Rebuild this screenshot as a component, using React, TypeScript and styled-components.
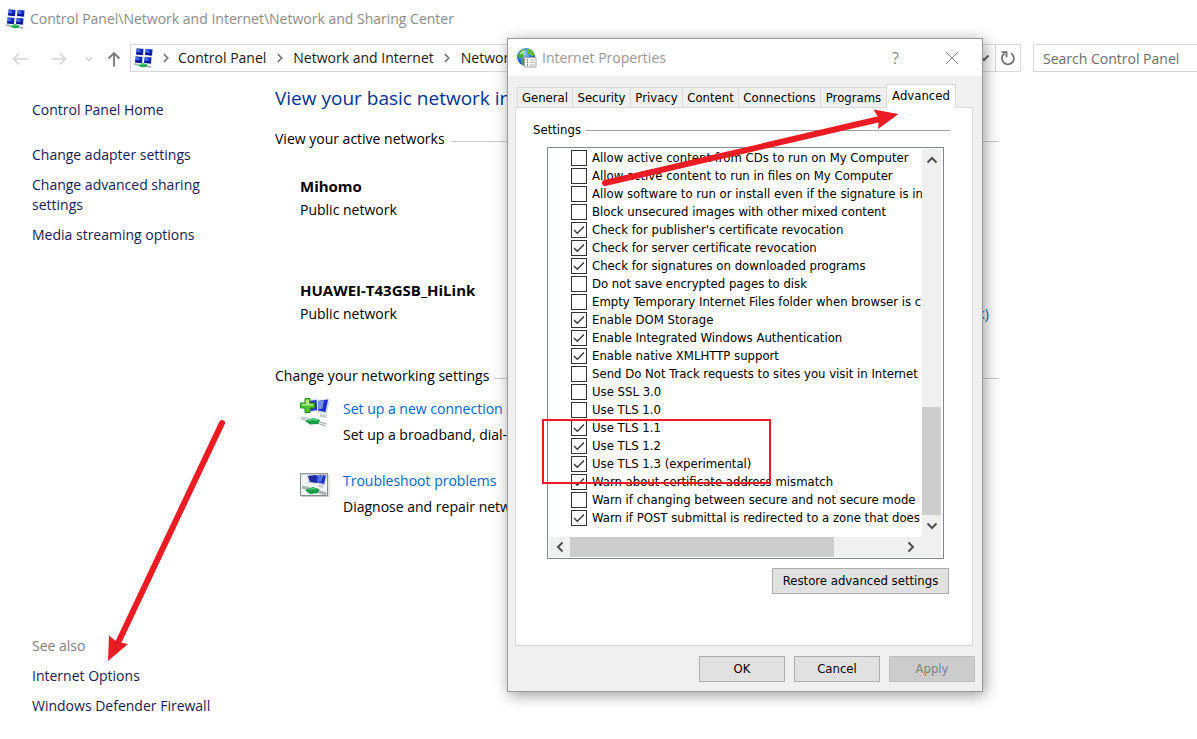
import React from "react";
import styled, { createGlobalStyle } from "styled-components";

const UI_FONT = '"Open Sans", "Noto Sans", sans-serif';
const DIALOG_FONT = '"DejaVu Sans Condensed", "DejaVu Sans", sans-serif';

const GlobalStyle = createGlobalStyle`
  *, *::before, *::after { box-sizing: border-box; }
  body { margin: 0; background: #fff; font-family: ${UI_FONT}; font-size: 14px; line-height: 20px; color: #000; }
  button, input { font: inherit; color: inherit; margin: 0; }
  h1, h2, p, ul { margin: 0; padding: 0; font-weight: 400; }
  a { text-decoration: none; color: inherit; }
`;

const Screen = styled.div`
  position: relative;
  display: flex;
  flex-direction: column;
  min-height: 100vh;
  overflow: hidden;
`;

const WindowTitle = styled.header`
  display: flex;
  align-items: center;
  gap: 4px;
  height: 38px;
  padding-left: 6px;
  color: #8c8c8c;
`;

const NavBar = styled.nav`
  display: flex;
  align-items: center;
  padding-top: 6px;
`;

const NavButtons = styled.div`
  display: grid;
  flex: none;
  grid-template-columns: 39px 33px 22px 16px;
  align-items: center;
  justify-items: start;
  width: 130px;
  padding: 2px 0 0 12px;
`;

const IconButton = styled.button`
  display: flex;
  align-items: center;
  justify-content: center;
  padding: 0;
  border: 0;
  background: none;
`;

const AddressBar = styled.div`
  display: flex;
  flex: 1;
  align-items: center;
  min-width: 0;
  height: 28px;
  padding-left: 3px;
  border: 1px solid #d9d9d9;
  white-space: nowrap;
`;

const Crumb = styled.a`
  color: #1a1a1a;
`;

const CrumbArrow = styled.span<{ $first?: boolean }>`
  display: flex;
  justify-content: center;
  width: ${(p) => (p.$first ? 24 : 27)}px;
`;

const AddressTail = styled.div`
  display: flex;
  align-self: stretch;
  margin-left: auto;
`;

const RefreshButton = styled(IconButton)`
  width: 25px;
  margin-left: 4px;
  border-left: 1px solid #d9d9d9;
`;

const SearchBox = styled.input`
  flex: 0 0 164px;
  width: 164px;
  height: 28px;
  margin-left: 12px;
  padding: 0 0 0 9px;
  border: 1px solid #d9d9d9;
  border-right: 0;
  background: #fff;
  &::placeholder { color: #6d6d6d; opacity: 1; }
`;

const Content = styled.div`
  display: flex;
  flex: 1;
`;

const Sidebar = styled.aside`
  display: flex;
  flex: none;
  flex-direction: column;
  width: 275px;
  padding: 28px 50px 23px 32px;
`;

const SideList = styled.div<{ $end?: boolean }>`
  display: flex;
  flex-direction: column;
  gap: 10px;
  margin-top: ${(p) => (p.$end ? "auto" : "25px")};
`;

const SideLink = styled.a`
  color: #151c55;
`;

const SideCaption = styled.p`
  color: #808080;
`;

const Main = styled.main`
  flex: 1;
  max-width: 724px;
  padding-top: 12px;
  white-space: nowrap;
`;

const PageHeading = styled.h1`
  font-size: 19px;
  line-height: 28px;
  color: #003399;
`;

const SectionHeading = styled.h2`
  display: flex;
  align-items: center;
  gap: 6px;
  margin-top: 17px;
  font-size: 14px;
  line-height: 20px;
  &::after { content: ""; flex: 1; height: 1px; margin-top: 4px; background: #c8c8c8; }
`;

const Networks = styled.div`
  display: flex;
  flex-direction: column;
  gap: 56px;
  padding: 25px 10px 23px 25px;
`;

const NetworkRow = styled.div`
  display: flex;
  align-items: flex-end;
  justify-content: space-between;
  line-height: 24px;
`;

const NetworkName = styled.strong`
  display: block;
  font-size: 15px;
  font-weight: 700;
`;

const BlueLink = styled.a`
  color: #0066cc;
`;

const Tasks = styled.div`
  display: flex;
  flex-direction: column;
  gap: 20px;
  padding: 10px 0 0 25px;
`;

const Task = styled.div`
  display: flex;
  gap: 13px;
  line-height: 26px;
`;

const Dialog = styled.section`
  position: absolute;
  top: 38px;
  left: 507px;
  width: 476px;
  border: 1px solid #999;
  background: #f0f0f0;
  box-shadow: 2px 3px 14px rgba(0, 0, 0, 0.4);
  font-family: ${DIALOG_FONT};
  font-size: 13px;
  line-height: 18px;
`;

const DialogTitle = styled.header`
  display: flex;
  align-items: center;
  height: 37px;
  padding: 0 23px 0 9px;
  gap: 5px;
  background: #fff;
  font-family: ${UI_FONT};
  font-size: 14px;
  color: #999;
`;

const DialogTools = styled.div`
  display: flex;
  align-items: center;
  gap: 46px;
  margin-left: auto;
  color: #8a8a8a;
  font-size: 16px;
`;

const DialogBody = styled.div`
  padding: 8px 7px 9px;
`;

const TabRow = styled.div`
  display: flex;
  align-items: flex-end;
  padding: 0 16px 0 2px;
`;

const Tab = styled.button<{ $active?: boolean; $width: number }>`
  flex: 0 0 ${(p) => p.$width}px;
  height: ${(p) => (p.$active ? 24 : 20)}px;
  margin-bottom: ${(p) => (p.$active ? -1 : 0)}px;
  padding: 0 0 ${(p) => (p.$active ? 2 : 0)}px;
  border: 1px solid #d9d9d9;
  border-bottom: 0;
  border-right-width: ${(p) => (p.$active ? 1 : 0)}px;
  background: ${(p) => (p.$active ? "#fff" : "#f0f0f0")};
  white-space: nowrap;
  position: relative;
`;

const TabPanel = styled.div`
  margin-right: 2px;
  padding: 13px 22px 51px 17px;
  border: 1px solid #d9d9d9;
  background: #fff;
`;

const GroupTitle = styled.h2`
  display: flex;
  align-items: center;
  gap: 5px;
  font-size: 13px;
  line-height: 18px;
  &::after { content: ""; flex: 1; height: 1px; background: #a0a0a0; }
`;

const ListBox = styled.div`
  display: grid;
  grid-template-columns: minmax(0, 1fr) 19px;
  margin: 8px 6px 9px 14px;
  padding: 1px 2px 1px 1px;
  border: 1px solid #828790;
`;

const Options = styled.ul`
  overflow: hidden;
  padding: 0 0 10px 22px;
  list-style: none;
`;

const Option = styled.label`
  display: flex;
  align-items: center;
  gap: 5px;
  height: 18px;
  white-space: nowrap;
`;

const CheckBox = styled.input`
  appearance: none;
  flex: none;
  width: 16px;
  height: 16px;
  border: 1px solid #333;
  background: #fff;
  &:checked {
    background: #fff url("data:image/svg+xml,%3Csvg xmlns='http://www.w3.org/2000/svg' viewBox='0 0 14 14'%3E%3Cpath d='M2 7l3.300 3.300L12 3.500' fill='none' stroke='%23333' stroke-width='1.300'/%3E%3C/svg%3E") center / 14px 14px no-repeat;
  }
`;

const VerticalBar = styled.div`
  display: flex;
  flex-direction: column;
  background: #f0f0f0;
`;

const HorizontalBar = styled.div`
  display: flex;
  grid-column: 1 / -1;
  height: 20px;
  padding-right: 20px;
  background: #f0f0f0;
`;

const BarButton = styled(IconButton)<{ $vertical?: boolean }>`
  flex: none;
  width: ${(p) => (p.$vertical ? 19 : 21)}px;
  height: ${(p) => (p.$vertical ? 22 : 20)}px;
`;

const Track = styled.div<{ $vertical?: boolean }>`
  display: flex;
  flex: 1;
  flex-direction: ${(p) => (p.$vertical ? "column" : "row")};
  justify-content: ${(p) => (p.$vertical ? "flex-end" : "flex-start")};
`;

const Thumb = styled.div<{ $size: string }>`
  flex: 0 0 ${(p) => p.$size};
  background: #cdcdcd;
`;

const PushButton = styled.button<{ $wide?: boolean }>`
  width: ${(p) => (p.$wide ? 177 : 86)}px;
  height: 26px;
  padding: 0;
  border: 1px solid #adadad;
  background: #e1e1e1;
  &:disabled { border-color: #bfbfbf; background: #ccc; color: #838383; }
`;

const ButtonRow = styled.div<{ $footer?: boolean }>`
  display: flex;
  justify-content: flex-end;
  gap: 9px;
  margin: ${(p) => (p.$footer ? "10px 0 0" : "0 1px 0 0")};
`;

const Annotations = styled.svg`
  position: absolute;
  top: 0;
  left: 0;
  pointer-events: none;
`;

const screens: [number, number][] = [[2, 0], [11, 0.5], [1, 8], [10, 8.5]];

function NetworkIcon() {
  return (
    <svg width="20" height="20" viewBox="0 0 20 20" aria-hidden="true">
      {screens.map(([x, y]) => (
        <g key={`${x}-${y}`}>
          <path d={`M${x} ${y}l8.400 .4-.9 7.400-7.900-.8z`} fill="#cfd8e8" />
          <path d={`M${x + 0.8} ${y + 0.5}l6.600 .4-.6 6-6.600-.7z`} fill="#1228bd" />
          <path d={`M${x + 0.8} ${y + 0.5}l2.600 .2 1.200 3.400-4.300 1.500z`} fill="#4668e6" />
          <path d={`M${x + 0.4} ${y + 4.2}l6.300 .6-.3 2.100-6.200-.7z`} fill="#070f94" />
        </g>
      ))}
      <path d="M0 16l4 .8M12 18l5 1.200" stroke="#aeb8b6" strokeWidth="1.800" />
      <path d="M3.500 17l5.500-2 4 1.500-.5 2.400-5 .3z" fill="#19a94b" />
      <path d="M5 17l4-1.200 2 .8" stroke="#6be391" fill="none" />
    </svg>
  );
}

function Monitors() {
  return (
    <g>
      <path d="M8 4l9-1 1 12-8 1z" fill="#c9d2e2" />
      <path d="M9 5l7.500-1 .6 10-6.500 1z" fill="#2438c9" />
      <path d="M17 4l13-1.500-3 16-10-2z" fill="#d9dfe9" />
      <path d="M18 5l10-1.400L25.500 16 18 14.500z" fill="#1d2fc7" />
      <path d="M18 5l6-.8-1.500 8.300-4.500 1z" fill="#718ff0" />
      <path d="M20 18l7 1-1 3-6-1z" fill="#c8cecf" />
      <path d="M1 22l9 2M17 26l9 3" stroke="#a9b5b1" strokeWidth="3" />
      <path d="M1 22l9 2M17 26l9 3" stroke="#edf1f0" strokeWidth="1" />
      <path d="M5 25l8-3 7 2-2 4-8 .5z" fill="#149c45" />
      <path d="M9 24.500l5-1.300 3 1.300" stroke="#62dd8c" strokeWidth="1.200" fill="none" />
    </g>
  );
}

function NewConnectionIcon() {
  return (
    <svg width="30" height="32" viewBox="0 0 30 32" aria-hidden="true">
      <Monitors />
      <path d="M5 2.500h5v4.500h4.500v5H10v4.500H5V12H.5V7H5z" fill="#4cc42c" stroke="#278c1b" />
      <path d="M6 3.500h3V8h4.500v1.500h-12V8H6z" fill="#a5ee7f" />
    </svg>
  );
}

function TroubleshootIcon() {
  return (
    <svg width="30" height="32" viewBox="0 0 30 32" aria-hidden="true">
      <path d="M1 28.500h28V7" stroke="#c9c9c9" fill="none" />
      <rect x=".5" y="5.500" width="27" height="22" fill="#f5f6f7" stroke="#858c92" />
      <path d="M7 7h11l9 0-2 11-8-2-9-1z" fill="#ced6e4" />
      <path d="M8 8l8-1 1 8-7-1z" fill="#1c2b9f" />
      <path d="M16 7.500h10L24 16l-8-2z" fill="#1c32c8" />
      <path d="M18 8h5l-2 6-4-1z" fill="#5276e6" />
      <path d="M19 17l5 1-1 2-5-1z" fill="#c2c9cb" />
      <path d="M2 19l8 2M17 23l9 3" stroke="#a6b2ae" strokeWidth="3" />
      <path d="M5 22l8-3 6 2-1 4-8 1z" fill="#149c45" />
      <path d="M9 21.500l4-1 3 1" stroke="#62dd8c" fill="none" />
      <path d="M1 6h26" stroke="#a8afb5" />
      <path d="M20 7h1M23 7h1" stroke="#555" />
    </svg>
  );
}

function GlobeIcon() {
  return (
    <svg width="20" height="20" viewBox="0 0 20 20" aria-hidden="true">
      <defs>
        <radialGradient id="sea" cx=".4" cy=".3" r=".75">
          <stop offset="0" stopColor="#9bd9fa" />
          <stop offset=".5" stopColor="#2f7ed6" />
          <stop offset="1" stopColor="#123a9c" />
        </radialGradient>
      </defs>
      <circle cx="9" cy="9" r="9" fill="url(#sea)" />
      <path d="M1 7c1-3 3-5 6-6 2 1 0 2-1 4s1 3 0 4-2 0-3 1-2-1-2-3z" fill="#49ad31" />
      <path d="M4 11c2 0 4 1 4 3s-1 3-2 3c-2-1-2-4-2-6z" fill="#3f9d33" />
      <path d="M10 .5c4 0 7 3 7.500 6.500-2 1.500-3 1-4 0s-3-1-3-3z" fill="#5dbb35" />
      <path d="M3 5c2-2 3-3 5-3l-1 2-3 3z" fill="#b5ea8b" />
      <path d="M7.500 9.500h11.500v9.500H7.500z" fill="#fbfbfb" stroke="#a8a8a8" />
      <path d="M10 12h1M10 14.500h1M10 17h1" stroke="#2f75c5" strokeWidth="1.300" />
      <path d="M12.500 12h5M12.500 14.500h5M12.500 17h5" stroke="#b6b6b6" />
    </svg>
  );
}

type Direction = "up" | "down" | "left" | "right";
const chevronPaths: Record<Direction, string> = {
  up: "M2.500 9.500L7 5l4.500 4.500",
  down: "M2.500 4.500L7 9l4.500-4.500",
  left: "M9.500 2.500L5 7l4.500 4.500",
  right: "M4.500 2.500L9 7l-4.500 4.500",
};

function Chevron({ to, color = "#505050", size = 14, weight = 2 }: { to: Direction; color?: string; size?: number; weight?: number }) {
  return (
    <svg width={size} height={size} viewBox="0 0 14 14" aria-hidden="true">
      <path d={chevronPaths[to]} fill="none" stroke={color} strokeWidth={weight} />
    </svg>
  );
}

function ArrowGlyph({ d, color, weight }: { d: string; color: string; weight: number }) {
  return (
    <svg width="16" height="16" viewBox="0 0 16 16" aria-hidden="true">
      <path d={d} fill="none" stroke={color} strokeWidth={weight} />
    </svg>
  );
}

const tabs: { label: string; width: number }[] = [
  { label: "General", width: 55 },
  { label: "Security", width: 58 },
  { label: "Privacy", width: 52 },
  { label: "Content", width: 56 },
  { label: "Connections", width: 82 },
  { label: "Programs", width: 66 },
  { label: "Advanced", width: 70 },
];

const options: [string, boolean][] = [
  ["Allow active content from CDs to run on My Computer", false],
  ["Allow active content to run in files on My Computer", false],
  ["Allow software to run or install even if the signature is invalid", false],
  ["Block unsecured images with other mixed content", false],
  ["Check for publisher's certificate revocation", true],
  ["Check for server certificate revocation", true],
  ["Check for signatures on downloaded programs", true],
  ["Do not save encrypted pages to disk", false],
  ["Empty Temporary Internet Files folder when browser is closed", false],
  ["Enable DOM Storage", true],
  ["Enable Integrated Windows Authentication", true],
  ["Enable native XMLHTTP support", true],
  ["Send Do Not Track requests to sites you visit in Internet Explorer", false],
  ["Use SSL 3.0", false],
  ["Use TLS 1.0", false],
  ["Use TLS 1.1", true],
  ["Use TLS 1.2", true],
  ["Use TLS 1.3 (experimental)", true],
  ["Warn about certificate address mismatch", true],
  ["Warn if changing between secure and not secure mode", false],
  ["Warn if POST submittal is redirected to a zone that does not permit posts", true],
];

function InternetProperties() {
  return (
    <Dialog role="dialog" aria-label="Internet Properties">
      <DialogTitle>
        <GlobeIcon />
        <span>Internet Properties</span>
        <DialogTools>
          <IconButton aria-label="Help">?</IconButton>
          <IconButton aria-label="Close">
            <svg width="14" height="14" viewBox="0 0 14 14" aria-hidden="true">
              <path d="M1 1l12 12M13 1L1 13" stroke="#8a8a8a" />
            </svg>
          </IconButton>
        </DialogTools>
      </DialogTitle>
      <DialogBody>
        <TabRow role="tablist">
          {tabs.map(({ label, width }) => (
            <Tab key={label} role="tab" $width={width} $active={label === "Advanced"} aria-selected={label === "Advanced"}>
              {label}
            </Tab>
          ))}
        </TabRow>
        <TabPanel role="tabpanel">
          <GroupTitle>Settings</GroupTitle>
          <ListBox>
            <Options>
              {options.map(([label, checked]) => (
                <li key={label}>
                  <Option>
                    <CheckBox type="checkbox" defaultChecked={checked} />
                    {label}
                  </Option>
                </li>
              ))}
            </Options>
            <VerticalBar>
              <BarButton $vertical aria-label="Scroll up"><Chevron to="up" /></BarButton>
              <Track $vertical><Thumb $size="108px" /></Track>
              <BarButton $vertical aria-label="Scroll down"><Chevron to="down" /></BarButton>
            </VerticalBar>
            <HorizontalBar>
              <BarButton aria-label="Scroll left"><Chevron to="left" /></BarButton>
              <Track><Thumb $size="80%" /></Track>
              <BarButton aria-label="Scroll right"><Chevron to="right" /></BarButton>
            </HorizontalBar>
          </ListBox>
          <ButtonRow>
            <PushButton $wide>Restore advanced settings</PushButton>
          </ButtonRow>
        </TabPanel>
        <ButtonRow $footer>
          <PushButton>OK</PushButton>
          <PushButton>Cancel</PushButton>
          <PushButton disabled>Apply</PushButton>
        </ButtonRow>
      </DialogBody>
    </Dialog>
  );
}

export default function App() {
  return (
    <>
      <GlobalStyle />
      <Screen>
        <WindowTitle>
          <NetworkIcon />
          <span>Control Panel\Network and Internet\Network and Sharing Center</span>
        </WindowTitle>
        <NavBar>
          <NavButtons>
            <IconButton aria-label="Back"><ArrowGlyph d="M15.500 8H1.500M7 2.500L1.500 8 7 13.500" color="#d4d4d4" weight={1.5} /></IconButton>
            <IconButton aria-label="Forward"><ArrowGlyph d="M.5 8h14M9 2.500l5.500 5.500L9 13.500" color="#d4d4d4" weight={1.5} /></IconButton>
            <IconButton aria-label="Recent locations"><Chevron to="down" color="#d0d0d0" size={10} /></IconButton>
            <IconButton aria-label="Up"><ArrowGlyph d="M8 15.500V2M2.500 7.500L8 2l5.500 5.500" color="#777" weight={1.8} /></IconButton>
          </NavButtons>
          <AddressBar>
            <NetworkIcon />
            <CrumbArrow $first><Chevron to="right" size={12} color="#777" /></CrumbArrow>
            <Crumb href="#">Control Panel</Crumb>
            <CrumbArrow><Chevron to="right" size={12} color="#777" /></CrumbArrow>
            <Crumb href="#">Network and Internet</Crumb>
            <CrumbArrow><Chevron to="right" size={12} color="#777" /></CrumbArrow>
            <Crumb href="#">Network and Sharing Center</Crumb>
            <AddressTail>
              <IconButton aria-label="Previous locations"><Chevron to="down" size={14} color="#666" /></IconButton>
              <RefreshButton aria-label="Refresh">
                <svg width="16" height="16" viewBox="0 0 16 16" aria-hidden="true">
                  <path d="M11 3.200a6 6 0 1 1-6.500.2" fill="none" stroke="#707070" strokeWidth="1.800" />
                  <path d="M1.500 2.200h5v5" fill="none" stroke="#707070" strokeWidth="1.800" />
                </svg>
              </RefreshButton>
            </AddressTail>
          </AddressBar>
          <SearchBox type="search" placeholder="Search Control Panel" aria-label="Search Control Panel" />
        </NavBar>
        <Content>
          <Sidebar>
            <SideLink href="#">Control Panel Home</SideLink>
            <SideList>
              <SideLink href="#">Change adapter settings</SideLink>
              <SideLink href="#">Change advanced sharing settings</SideLink>
              <SideLink href="#">Media streaming options</SideLink>
            </SideList>
            <SideList $end>
              <SideCaption>See also</SideCaption>
              <SideLink href="#">Internet Options</SideLink>
              <SideLink href="#">Windows Defender Firewall</SideLink>
            </SideList>
          </Sidebar>
          <Main>
            <PageHeading>View your basic network information and set up connections</PageHeading>
            <SectionHeading>View your active networks</SectionHeading>
            <Networks>
              <NetworkRow>
                <div>
                  <NetworkName>Mihomo</NetworkName>
                  Public network
                </div>
              </NetworkRow>
              <NetworkRow>
                <div>
                  <NetworkName>HUAWEI-T43GSB_HiLink</NetworkName>
                  Public network
                </div>
                <BlueLink href="#">(HUAWEI-T43GSB_HiLink)</BlueLink>
              </NetworkRow>
            </Networks>
            <SectionHeading>Change your networking settings</SectionHeading>
            <Tasks>
              <Task>
                <NewConnectionIcon />
                <div>
                  <BlueLink href="#">Set up a new connection or network</BlueLink>
                  <p>Set up a broadband, dial-up, or VPN connection; or set up a router.</p>
                </div>
              </Task>
              <Task>
                <TroubleshootIcon />
                <div>
                  <BlueLink href="#">Troubleshoot problems</BlueLink>
                  <p>Diagnose and repair network problems, or get troubleshooting information.</p>
                </div>
              </Task>
            </Tasks>
          </Main>
        </Content>
        <InternetProperties />
        <Annotations width="1000" height="700" viewBox="0 0 1000 700" aria-hidden="true">
          <path d="M605 183L882 118.500M222 423L118 643" stroke="#ed1c24" strokeWidth="6" strokeLinecap="round" />
          <path d="M898.500 114l-25-4.500 5.500 9-1 10.500zM108 661l1-25.500 8 6.500 11 2z" fill="#ed1c24" />
          <rect x="543" y="420" width="227" height="63" fill="none" stroke="#ed1c24" strokeWidth="2" />
        </Annotations>
      </Screen>
    </>
  );
}
